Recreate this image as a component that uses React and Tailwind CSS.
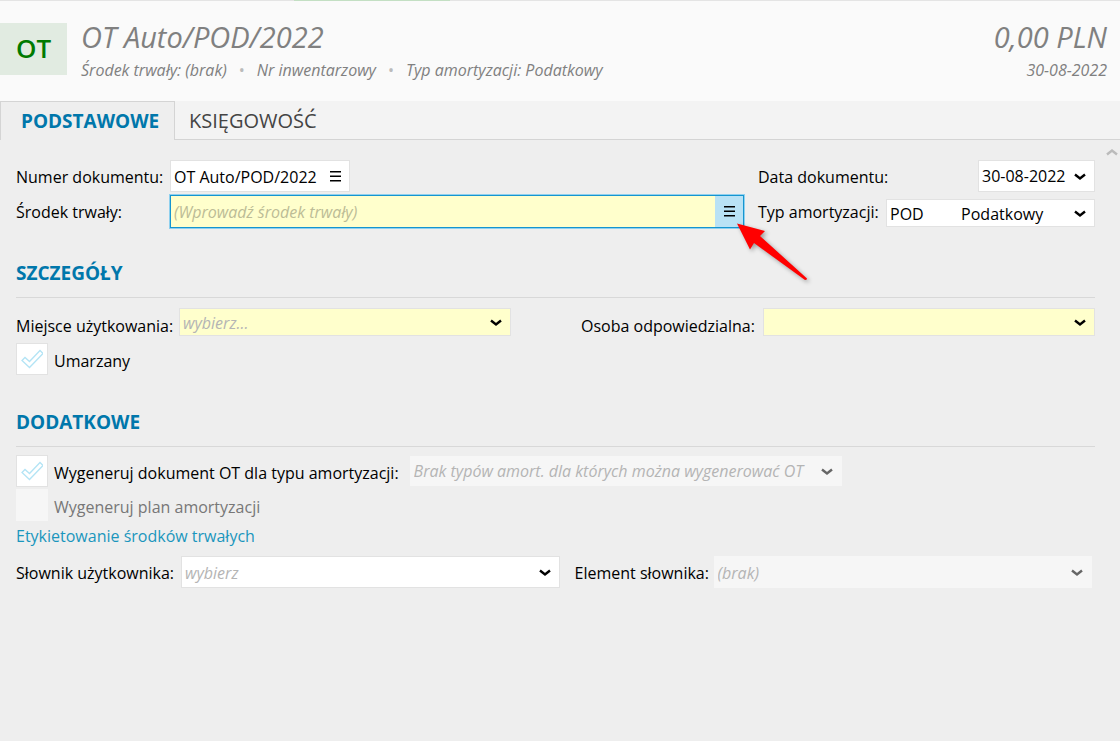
import { useState } from "react";
import clsx from "clsx";

const Chevron = ({ className }) => (
  <svg viewBox="0 0 12 8" className={clsx("h-2 w-3", className)} fill="none" stroke="currentColor" strokeWidth="2.4" aria-hidden="true">
    <path d="M1 1.5 L6 5.5 L11 1.5" />
  </svg>
);

const MenuIcon = () => (
  <svg viewBox="0 0 11 11" className="h-[11px] w-[11px]" fill="currentColor" aria-hidden="true">
    <path d="M0 0h11v1.5H0zM0 4.5h11v1.5H0zM0 9h11v1.5H0z" />
  </svg>
);

const SelectField = ({ id, label, options, placeholder, disabled, className, fieldClassName }) => (
  <div className={clsx("grid min-w-0 items-center", disabled ? "text-[#666]" : "text-black", className)}>
    <select
      id={id}
      aria-label={label}
      disabled={disabled}
      className={clsx(
        "col-start-1 row-start-1 h-full w-full appearance-none border pr-6 pl-[3px] text-base outline-none disabled:opacity-100",
        placeholder && "text-[#b4b4b4] italic",
        fieldClassName
      )}
    >
      {options.map((option) => (
        <option key={option}>{option}</option>
      ))}
    </select>
    <Chevron className="pointer-events-none col-start-1 row-start-1 mt-0.5 mr-[9px] justify-self-end" />
  </div>
);

const CheckField = ({ id, label, disabled }) => (
  <div className="flex items-center gap-1.5">
    <div className="grid h-8 w-8 shrink-0 place-items-center">
      <input
        id={id}
        type="checkbox"
        disabled={disabled}
        className="col-start-1 row-start-1 h-8 w-8 appearance-none border border-[#e2e2e2] bg-white disabled:border-[#f6f6f6] disabled:bg-[#f6f6f6]"
      />
      {!disabled && (
        <svg viewBox="0 0 22 20" className="pointer-events-none col-start-1 row-start-1 h-5 w-[22px]" fill="none" stroke="#b3e4f5" strokeWidth="1.3" aria-hidden="true">
          <path d="M1 11.5 L4 8.5 L8.5 12.5 L19 1.5 L22 4.5 L8.5 18.5 Z" />
        </svg>
      )}
    </div>
    <label htmlFor={id} className={clsx("pt-1", disabled && "text-[#777]")}>
      {label}
    </label>
  </div>
);

const SectionTitle = ({ children }) => (
  <h2 className="border-b border-[#d8d8d8] pb-3 text-[19px] leading-6 font-bold text-[#0077ab]">{children}</h2>
);

const Pointer = () => (
  <svg viewBox="0 0 80 68" className="pointer-events-none absolute top-6 left-[18px] z-10 h-[68px] w-20" aria-hidden="true">
    <path
      d="M4 3.5 L32 11 L27 16 L74 58.5 Q74 60 72 60 L21 23 L17 29.5 Z"
      fill="#ff0000"
      className="drop-shadow-[2px_2px_2px_rgba(0,0,0,0.35)]"
    />
  </svg>
);

const Header = () => (
  <header className="flex h-[101px] items-start border-t border-[#e4e4e4] bg-[#fafafa] pt-[22px] text-[#808080] italic">
    <div className="flex h-[52px] w-[67px] shrink-0 items-center justify-center bg-[#e1ebe1] pb-0.5 text-[26px] font-semibold text-[#007a00] not-italic">
      OT
    </div>
    <div className="-mt-1 ml-3.5 flex-1">
      <h1 className="text-[29px] leading-9">OT Auto/POD/2022</h1>
      <p className="flex gap-3 text-base leading-[30px]">
        <span>Środek trwały: (brak)</span>
        <span className="text-[#bbb] not-italic">•</span>
        <span>Nr inwentarzowy</span>
        <span className="text-[#bbb] not-italic">•</span>
        <span>Typ amortyzacji: Podatkowy</span>
      </p>
    </div>
    <div className="-mt-1 mr-[13px] text-right">
      <p className="text-[29px] leading-9">0,00 PLN</p>
      <p className="text-base leading-[30px]">30-08-2022</p>
    </div>
  </header>
);

const tabs = ["PODSTAWOWE", "KSIĘGOWOŚĆ"];

const Tabs = ({ active, onChange }) => (
  <nav className="flex h-[39px] bg-[#f3f3f3]" role="tablist">
    {tabs.map((tab) => (
      <button
        key={tab}
        type="button"
        role="tab"
        aria-selected={tab === active}
        onClick={() => onChange(tab)}
        className={clsx(
          "text-left",
          tab === active
            ? "w-[175px] border-t border-r border-l border-[#d4d4d4] bg-[#eee] pl-5 text-[19px] font-bold text-[#0077ab]"
            : "border-b border-[#d4d4d4] px-3.5 pt-px text-xl text-[#444]"
        )}
      >
        {tab}
      </button>
    ))}
    <div className="flex-1 border-b border-[#d4d4d4]" />
  </nav>
);

export default function App() {
  const [active, setActive] = useState(tabs[0]);

  return (
    <div className="min-h-screen bg-[#eee] font-['Open_Sans','Noto_Sans',sans-serif] text-base text-black">
      <div className="absolute top-0 left-[294px] h-px w-[156px] bg-[#c3dfc3]" />
      <Header />
      <Tabs active={active} onChange={setActive} />

      <main className="flex items-start">
        <form className="min-w-0 flex-1 pt-5 pl-4">
          <div className="flex gap-[13px]">
            <div className="flex min-w-0 flex-1 flex-col gap-0.5">
              <div className="flex h-8 items-center">
                <label htmlFor="number" className="w-[154px] shrink-0 pt-0.5">Numer dokumentu:</label>
                <div className="flex h-8 w-[180px] border border-[#e2e2e2] bg-white">
                  <input id="number" defaultValue="OT Auto/POD/2022" className="min-w-0 flex-1 pt-0.5 pl-[3px] outline-none" />
                  <button type="button" aria-label="Wybierz numer" className="flex w-7 items-center justify-center">
                    <MenuIcon />
                  </button>
                </div>
              </div>
              <div className="flex h-[35px] items-center">
                <label htmlFor="asset" className="w-[154px] shrink-0">Środek trwały:</label>
                <div className="mr-px flex h-[33px] min-w-0 flex-1 border border-[#1595d0] bg-[#ffffcc] ring-1 ring-[#8fd0ee]">
                  <input
                    id="asset"
                    placeholder="(Wprowadź środek trwały)"
                    className="min-w-0 flex-1 pl-[3px] italic outline-none placeholder:text-[#bcbc96]"
                  />
                  <div className="relative flex">
                    <button type="button" aria-label="Wybierz środek trwały" className="flex w-7 items-center justify-center bg-[#b9e2f5]">
                      <MenuIcon />
                    </button>
                    <Pointer />
                  </div>
                </div>
              </div>
            </div>
            <div className="flex w-[337px] shrink-0 flex-col gap-[7px]">
              <div className="flex h-8 items-center justify-between">
                <label htmlFor="date" className="pt-0.5">Data dokumentu:</label>
                <SelectField id="date" options={["30-08-2022"]} className="h-8 w-[117px]" fieldClassName="border-[#e2e2e2] bg-white" />
              </div>
              <div className="flex h-7 items-center">
                <label htmlFor="type" className="w-32 shrink-0 pb-0.5">Typ amortyzacji:</label>
                <SelectField
                  id="type"
                  options={["POD\u00a0\u00a0\u00a0\u00a0\u00a0\u00a0\u00a0\u00a0\u00a0Podatkowy"]}
                  className="h-7 flex-1"
                  fieldClassName="border-[#e2e2e2] bg-white pt-0.5"
                />
              </div>
            </div>
          </div>

          <section className="mt-8">
            <SectionTitle>SZCZEGÓŁY</SectionTitle>
            <div className="mt-2.5 flex h-7 items-center">
              <label htmlFor="place" className="w-[163px] shrink-0 pt-[7px]">Miejsce użytkowania:</label>
              <SelectField id="place" options={["wybierz..."]} placeholder className="h-7 flex-1" fieldClassName="border-[#e2e2e2] bg-[#ffffcc] pt-0.5" />
              <label htmlFor="person" className="ml-[70px] w-[182px] shrink-0 pt-[7px]">Osoba odpowiedzialna:</label>
              <SelectField id="person" options={[""]} className="h-7 flex-1" fieldClassName="border-[#e2e2e2] bg-[#ffffcc]" />
            </div>
            <div className="mt-[7px]">
              <CheckField id="depreciated" label="Umarzany" />
            </div>
          </section>

          <section className="mt-[35px]">
            <SectionTitle>DODATKOWE</SectionTitle>
            <div className="mt-2 flex items-center gap-[11px]">
              <CheckField id="generate" label="Wygeneruj dokument OT dla typu amortyzacji:" />
              <SelectField
                label="Typ amortyzacji dokumentu OT"
                options={["Brak typów amort. dla których można wygenerować OT"]}
                placeholder
                disabled
                className="h-[30px] w-[432px]"
                fieldClassName="border-[#f6f6f6] bg-[#f6f6f6]"
              />
            </div>
            <div className="mt-0.5">
              <CheckField id="plan" label="Wygeneruj plan amortyzacji" disabled />
            </div>
            <a href="#etykiety" className="mt-[3px] block w-fit leading-6 text-[#1a96bd]">Etykietowanie środków trwałych</a>
            <div className="mt-2 flex h-8 items-center pr-[3px]">
              <label htmlFor="dictionary" className="w-[165px] shrink-0 pt-0.5">Słownik użytkownika:</label>
              <SelectField id="dictionary" options={["wybierz"]} placeholder className="h-8 flex-1" fieldClassName="border-[#e2e2e2] bg-white pt-0.5" />
              <label htmlFor="element" className="ml-[15px] w-[139px] shrink-0 pt-0.5">Element słownika:</label>
              <SelectField id="element" options={["(brak)"]} placeholder disabled className="h-8 flex-1" fieldClassName="border-[#f6f6f6] bg-[#f6f6f6] pt-0.5" />
            </div>
          </section>
        </form>

        <button type="button" aria-label="Przewiń w górę" className="flex w-[25px] justify-end pt-2 pr-0.5 text-[#bbb]">
          <Chevron className="rotate-180" />
        </button>
      </main>
    </div>
  );
}
